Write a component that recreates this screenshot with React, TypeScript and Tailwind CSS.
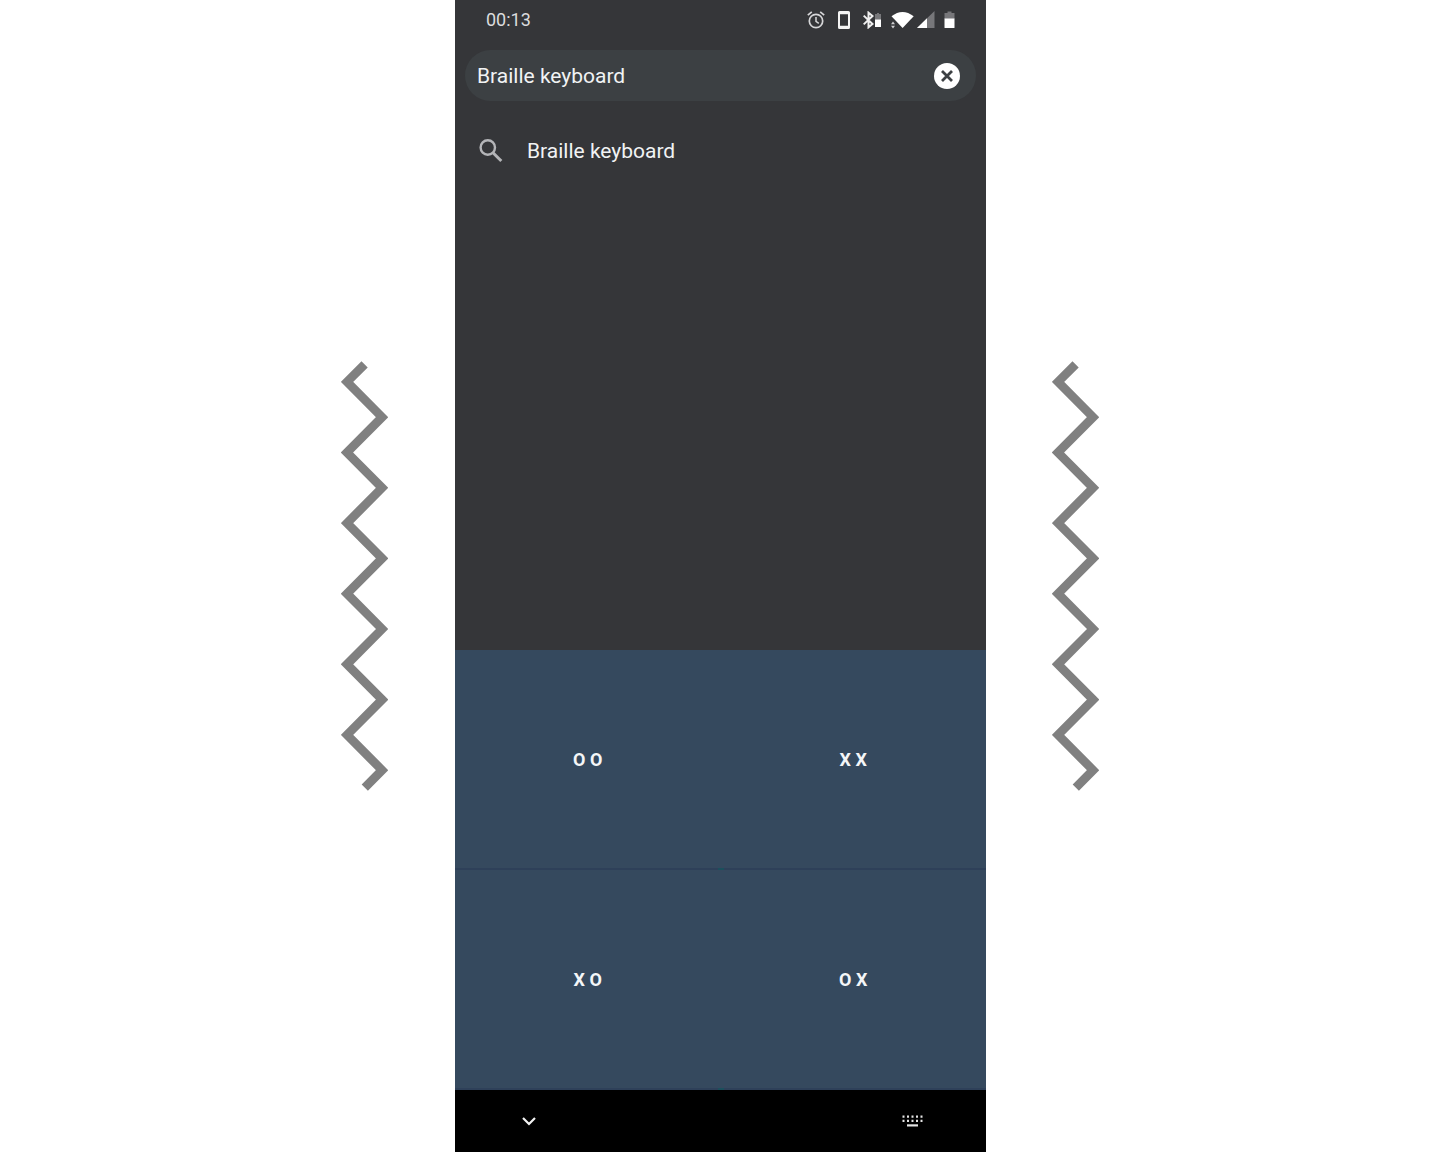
function Zigzag({ className }: { className: string }) {
  return (
    <svg className={className} width="47" height="430" viewBox="0 0 47 430" fill="none" aria-hidden="true">
      <path
        d="M23.6 3.3L6 20.9L41.1 56.2L6 91.5L41.1 126.8L6 162.1L41.1 197.4L6 232.700L41.1 268L6 303.300L41.1 338.600L6 373.900L41.1 409.200L23.8 426.600"
        stroke="#808080"
        strokeWidth="8.8"
        strokeMiterlimit="10"
      />
    </svg>
  );
}

function StatusBar() {
  return (
    <div className="flex h-10 items-center justify-between pr-[31px] pl-[31px]">
      <time className="text-[18px] leading-5 text-[#dcdcde]">00:13</time>
      <div className="flex items-center">
        <svg width="18" height="18" viewBox="0 0 18 18" fill="none" stroke="#d6d6d8" aria-label="Alarm set">
          <circle cx="9" cy="10" r="6.7" strokeWidth="1.7" />
          <path d="M9 6v4.4l2.8 1.9" strokeWidth="1.5" />
          <path d="M0.8 4.2L4.8 0.9M17.2 4.2L13.2 0.9" strokeWidth="1.7" />
        </svg>
        <svg className="ml-[13px]" width="12" height="18" viewBox="0 0 12 18" aria-label="Phone">
          <path fillRule="evenodd" fill="#f4f4f4" d="M1.5 0h9Q12 0 12 1.5v15Q12 18 10.5 18h-9Q0 18 0 16.5v-15Q0 0 1.5 0zM2 3.300v11.400h8V3.300z" />
        </svg>
        <svg className="ml-[13px]" width="19" height="18" viewBox="0 0 19 18" fill="none" aria-label="Bluetooth">
          <path d="M0.7 4.6L9.500 13L5.500 16.300V1.700L9.500 5L0.700 13.400" stroke="#f0f0f0" strokeWidth="2" />
          <path d="M13 3h1V2h2v1h2v6h-6V3z" fill="#77777a" />
          <path d="M12 8.500h6V16h-6z" fill="#fff" />
        </svg>
        <svg className="ml-[9px]" width="23" height="18" viewBox="0 0 23 18" aria-label="Wi-Fi">
          <path d="M0.5 5.3Q11.500-3.500 22.700 5.300L11.600 17z" fill="#fff" />
          <path d="M0 13.200L2 10.600L4 13.200zM0 14.800L2 17.400L4 14.800z" fill="#d0d0d2" />
        </svg>
        <svg className="ml-[3px]" width="18" height="18" viewBox="0 0 18 18" aria-label="Mobile signal">
          <path d="M17.5 0v17H0z" fill="#77777a" />
          <path d="M10 7.300V17H0z" fill="#fff" />
        </svg>
        <svg className="ml-[9px]" width="11" height="18" viewBox="0 0 11 18" aria-label="Battery">
          <path d="M0.5 2h3V0.500h4V2h3v6h-10z" fill="#77777a" />
          <path d="M0.5 7.500h10V16.500q0 .5-.5.5H1q-.5 0-.5-.5z" fill="#fff" />
        </svg>
      </div>
    </div>
  );
}

function SearchField() {
  return (
    <div className="mx-[10px] mt-[10px] flex h-[51px] items-center rounded-full bg-[#3c4043] pr-4 pl-3">
      <input
        type="text"
        aria-label="Search"
        defaultValue="Braille keyboard"
        className="min-w-0 flex-1 bg-transparent text-[21px] leading-6 text-[#f1f3f4] outline-none"
      />
      <button type="button" aria-label="Clear search" className="shrink-0">
        <svg width="26" height="26" viewBox="0 0 26 26" fill="none">
          <circle cx="13" cy="13" r="13" fill="#fff" />
          <path d="M8 8L18 18M18 8L8 18" stroke="#3c4043" strokeWidth="2.8" />
        </svg>
      </button>
    </div>
  );
}

function Suggestion({ text }: { text: string }) {
  return (
    <button type="button" className="mt-[26px] flex h-12 w-full items-center gap-6 px-6 text-left">
      <svg width="24" height="24" viewBox="0 0 24 24" fill="none" stroke="#b4b5b8" aria-hidden="true">
        <circle cx="8.8" cy="8.5" r="7.2" strokeWidth="2.4" />
        <path d="M14 13.700L22.300 22" strokeWidth="3" />
      </svg>
      <span className="text-[21px] leading-6 text-[#f1f3f4]">{text}</span>
    </button>
  );
}

function KeyRow({ keys }: { keys: string[] }) {
  return (
    <div className="relative grid h-[220px] grid-cols-2 border-b-2 border-[#2e4059]">
      {keys.map((label) => (
        <button key={label} type="button" className="pt-0.5 text-[18px] leading-5 font-bold text-[#f4f6f8]">
          {label}
        </button>
      ))}
      <span className="absolute -bottom-0.5 left-1/2 h-0.5 w-1.5 -translate-x-1/2 bg-[#1b4f5c]" />
    </div>
  );
}

export default function App() {
  return (
    <div className="flex min-h-screen items-stretch justify-center bg-white font-[Roboto,sans-serif]">
      <Zigzag className="mr-[67px] shrink-0 self-center" />
      <main className="flex w-full max-w-[531px] flex-col bg-[#353639]">
        <StatusBar />
        <SearchField />
        <Suggestion text="Braille keyboard" />
        <div className="flex-1" />
        <section aria-label="Braille keys" className="bg-[#35495e]">
          <KeyRow keys={["O O", "X X"]} />
          <KeyRow keys={["X O", "O X"]} />
        </section>
        <nav className="flex h-[62px] items-center justify-between bg-black pr-[63px] pl-[67px]">
          <button type="button" aria-label="Hide keyboard">
            <svg width="14" height="10" viewBox="0 0 14 10" fill="none">
              <path d="M1 2L7 8L13 2" stroke="#f2f2f2" strokeWidth="2.2" />
            </svg>
          </button>
          <button type="button" aria-label="Switch keyboard">
            <svg width="21" height="12" viewBox="0 0 21 12" fill="#e4e4e4">
              <path d="M0.5 0.5h2v2.200h-2zM5 0.500h2v2.200H5zM9.500 0.500h2v2.200h-2zM14 0.500h2v2.200h-2zM18.500 0.500h2v2.200h-2z" />
              <path d="M0.5 4.800h2V7h-2zM5 4.800h2V7H5zM9.500 4.800h2V7h-2zM14 4.800h2V7h-2zM18.500 4.800h2V7h-2z" />
              <path d="M5 9.300h11v2.200H5z" />
            </svg>
          </button>
        </nav>
      </main>
      <Zigzag className="ml-[66px] shrink-0 self-center" />
    </div>
  );
}
